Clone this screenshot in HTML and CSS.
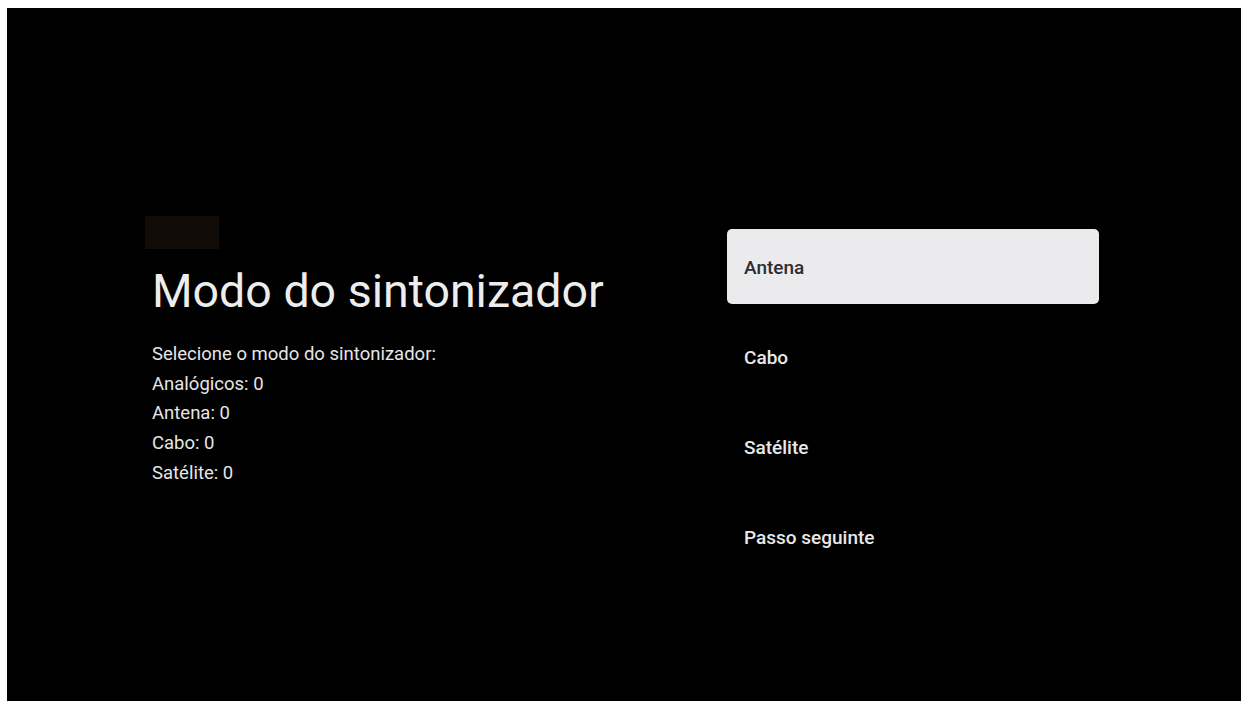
FILE: index.html
```html
<!DOCTYPE html>
<html>
<head>
<meta charset="utf-8">
<link rel="stylesheet" href="styles.css">
</head>
<body>
<div class="screen">
  <div class="left">
    <div class="logo"></div>
    <h1 class="title">Modo do sintonizador</h1>
    <div class="desc">
      <div class="line">Selecione o modo do sintonizador:</div>
      <div class="line">Analógicos: 0</div>
      <div class="line">Antena: 0</div>
      <div class="line">Cabo: 0</div>
      <div class="line">Satélite: 0</div>
    </div>
  </div>
  <div class="right">
    <div class="item selected">Antena</div>
    <div class="item">Cabo</div>
    <div class="item">Satélite</div>
    <div class="item">Passo seguinte</div>
  </div>
</div>
</body>
</html>
```
FILE: styles.css
```css
html, body {
  margin: 0;
  padding: 0;
  background: #ffffff;
}
body {
  padding: 8px 2px 3px 7px;
  font-family: Roboto, "Liberation Sans", sans-serif;
}
.screen {
  background: #000;
  height: 693px;
  display: flex;
  box-sizing: border-box;
}
.left {
  width: 577px;
  padding-left: 138px;
  padding-top: 208px;
  box-sizing: border-box;
  flex: none;
}
.logo {
  width: 74px;
  height: 33px;
  background: #120c08;
}
.title {
  margin: 12px 0 0 7px;
  font-size: 46.5px;
  font-weight: 400;
  color: #ededed;
  line-height: 60px;
  white-space: nowrap;
}
.desc {
  margin: 19px 0 0 7px;
  color: #e6e6e6;
  font-size: 18.5px;
}
.line {
  height: 29.7px;
  line-height: 29.7px;
  white-space: nowrap;
}
.right {
  padding-top: 221px;
  padding-left: 143px;
  display: flex;
  flex-direction: column;
}
.item {
  width: 372px;
  height: 75px;
  margin-bottom: 15px;
  box-sizing: border-box;
  padding-left: 17px;
  padding-top: 2px;
  display: flex;
  align-items: center;
  color: #e8e8e8;
  font-size: 19px;
  font-weight: 500;
  border-radius: 5px;
}
.item.selected {
  background: #ebebed;
  color: #2e2e30;
}
```
